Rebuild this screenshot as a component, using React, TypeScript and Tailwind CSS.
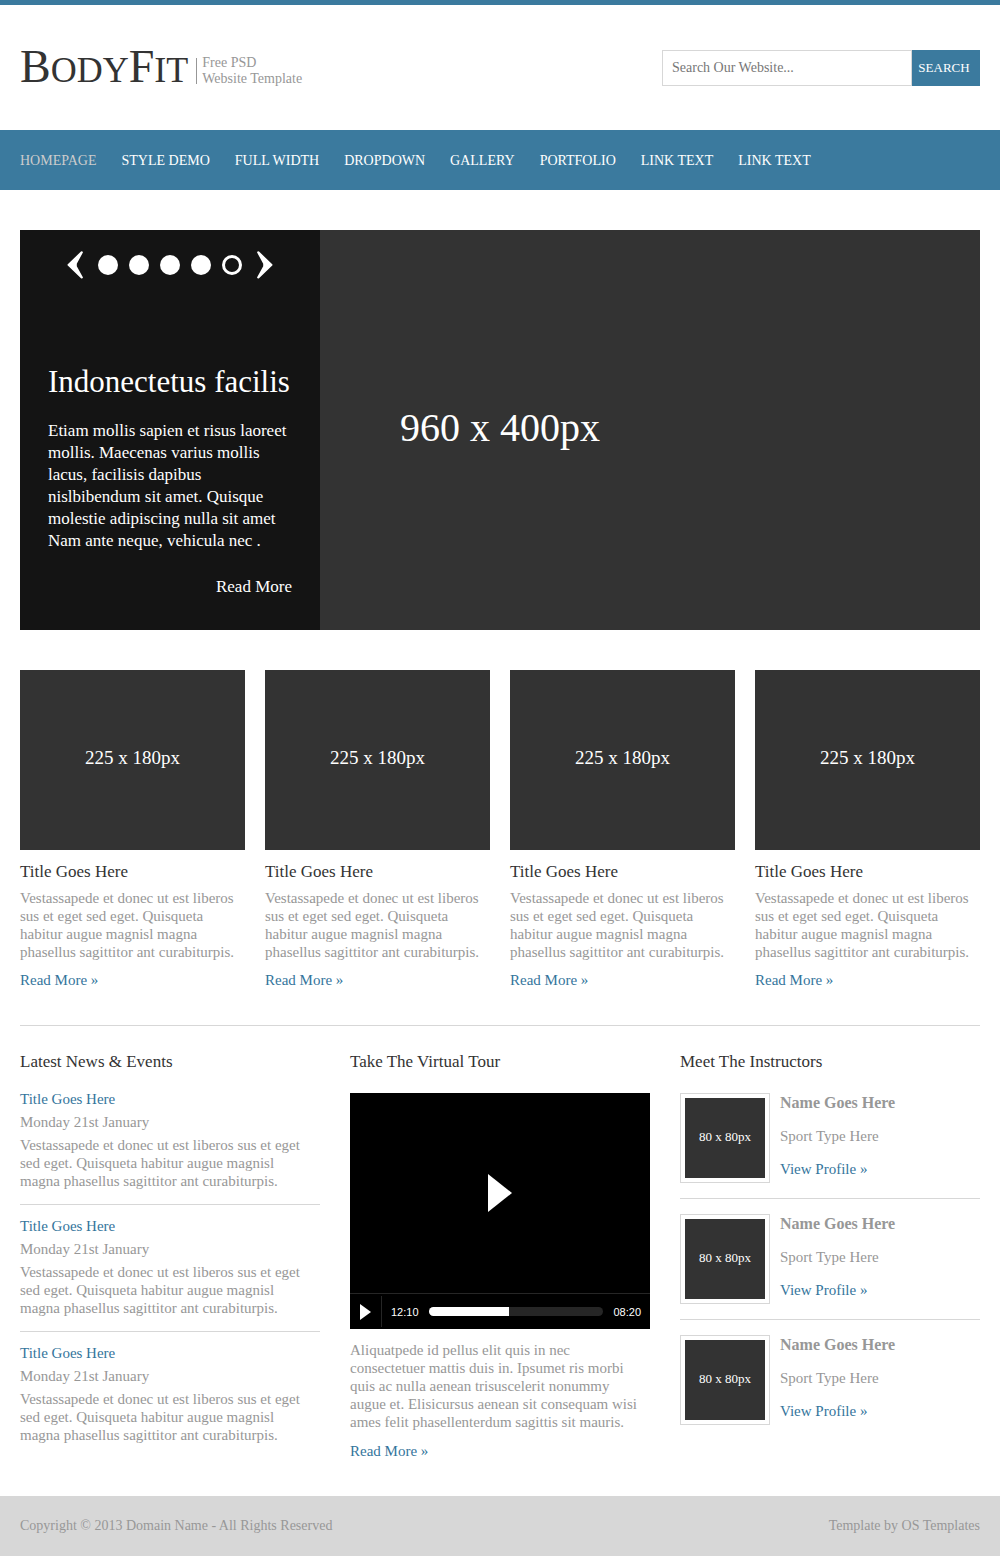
import React from "react";

const navLinks = [
  "HOMEPAGE",
  "STYLE DEMO",
  "FULL WIDTH",
  "DROPDOWN",
  "GALLERY",
  "PORTFOLIO",
  "LINK TEXT",
  "LINK TEXT",
];

function TextLink({ children }: { children: React.ReactNode }) {
  return (
    <a href="#" className="text-[#34759c] hover:underline">
      {children}
    </a>
  );
}

function Header() {
  return (
    <header className="border-t-5 border-[#3b7a9e]">
      <div className="mx-auto flex h-[125px] max-w-[1000px] items-center justify-between px-5">
        <div className="flex items-center pt-[6px]">
          <h1 className="pb-1 text-[46px] leading-[46px] text-[#333333]">
            <a href="#">
              B<span className="text-[36px]">ODY</span>F<span className="text-[36px]">IT</span>
            </a>
          </h1>
          <div className="ml-2 h-[26px] w-px bg-[#979797]" />
          <p className="ml-[5px] text-[14px] leading-4">
            Free PSD
            <br />
            Website Template
          </p>
        </div>
        <form className="flex h-9" onSubmit={(e) => e.preventDefault()}>
          <input
            type="text"
            aria-label="Search our website"
            placeholder="Search Our Website..."
            className="w-[250px] border border-[#d7d7d7] px-[9px] text-[14px] text-[#777777] outline-none placeholder:text-[#777777]"
          />
          <button type="submit" className="w-[68px] bg-[#3b7a9e] pr-1 text-[13px] text-white">
            SEARCH
          </button>
        </form>
      </div>
    </header>
  );
}

function Nav() {
  return (
    <nav className="bg-[#3b7a9e]">
      <ul className="mx-auto flex h-[60px] max-w-[1000px] items-center gap-[25px] px-5 pt-[2px] text-[14px] text-white">
        {navLinks.map((label, i) => (
          <li key={i}>
            <a href="#" className={i === 0 ? "text-[#cccccc]" : "hover:text-[#cccccc]"}>
              {label}
            </a>
          </li>
        ))}
      </ul>
    </nav>
  );
}

function Hero() {
  return (
    <section className="relative flex h-[400px] items-center justify-center bg-[#333333] pb-1 text-white">
      <p className="text-[40px] leading-[40px]">960 x 400px</p>
      <div className="absolute inset-y-0 left-0 flex w-[300px] flex-col bg-[#141414] px-7">
        <div className="mt-5 flex h-[30px] items-center justify-center">
          <button type="button" aria-label="Previous slide" className="mr-[14px]">
            <svg width="17" height="28" viewBox="0 0 17 28" fill="white">
              <path d="M14 .5Q15.300 0 16 1.300L9.800 12.800V15.200L16 26.500Q15.300 28 14 27.300L.500 14.300V13.500Z" />
            </svg>
          </button>
          <div className="flex gap-[11px]">
            {[1, 2, 3, 4, 5].map((n) => (
              <button
                key={n}
                type="button"
                aria-label={`Slide ${n}`}
                className={
                  n === 5
                    ? "size-5 rounded-full border-3 border-white"
                    : "size-5 rounded-full bg-white"
                }
              />
            ))}
          </div>
          <button type="button" aria-label="Next slide" className="ml-[14px]">
            <svg width="17" height="28" viewBox="0 0 17 28" fill="white">
              <path d="M3 .5Q1.700 0 1 1.300L7.200 12.800V15.200L1 26.500Q1.700 28 3 27.300L16.500 14.300V13.500Z" />
            </svg>
          </button>
        </div>
        <h2 className="mt-[84px] text-[31px] leading-9 whitespace-nowrap">Indonectetus facilis</h2>
        <p className="mt-5 text-[17px] leading-[22px]">
          Etiam mollis sapien et risus laoreet mollis. Maecenas varius mollis lacus, facilisis
          dapibus nislbibendum sit amet. Quisque molestie adipiscing nulla sit amet Nam ante neque,
          vehicula nec .
        </p>
        <a href="#" className="mt-6 self-end text-[17px] leading-[22px]">
          Read More
        </a>
      </div>
    </section>
  );
}

function FeatureCard() {
  return (
    <article>
      <div className="flex h-[180px] items-center justify-center bg-[#333333] pb-1 text-[19px] text-white">
        225 x 180px
      </div>
      <h2 className="mt-[10px] text-[17px] leading-6 text-[#333333]">Title Goes Here</h2>
      <p className="mt-[5px]">
        Vestassapede et donec ut est liberos sus et eget sed eget. Quisqueta habitur augue magnisl
        magna phasellus sagittitor ant curabiturpis.
      </p>
      <p className="mt-[10px]">
        <TextLink>Read More »</TextLink>
      </p>
    </article>
  );
}

function ColumnTitle({ children }: { children: React.ReactNode }) {
  return <h2 className="text-[17px] leading-6 text-[#333333]">{children}</h2>;
}

function News() {
  return (
    <section>
      <ColumnTitle>Latest News &amp; Events</ColumnTitle>
      <ul className="mt-4">
        {[0, 1, 2].map((i) => (
          <li
            key={i}
            className="mb-3 flex flex-col gap-[5px] border-b border-[#d7d7d7] pb-[14px] last:mb-0 last:border-0 last:pb-0"
          >
            <TextLink>Title Goes Here</TextLink>
            <p>Monday 21st January</p>
            <p className="pr-3">
              Vestassapede et donec ut est liberos sus et eget sed eget. Quisqueta habitur augue
              magnisl magna phasellus sagittitor ant curabiturpis.
            </p>
          </li>
        ))}
      </ul>
    </section>
  );
}

function Tour() {
  return (
    <section>
      <ColumnTitle>Take The Virtual Tour</ColumnTitle>
      <div className="mt-[19px] bg-black text-white">
        <div className="flex h-[200px] items-center justify-center">
          <button type="button" aria-label="Play video">
            <svg width="24" height="38" viewBox="0 0 24 38" fill="white">
              <path d="M0 0 24 19 0 38Z" />
            </svg>
          </button>
        </div>
        <div className="flex h-9 items-center border-t border-[#262626] pr-[9px] font-['Liberation_Sans'] text-[11px]">
          <button
            type="button"
            aria-label="Play"
            className="flex h-[31px] w-8 items-center border-r border-[#262626] pl-[10px]"
          >
            <svg width="11" height="16" viewBox="0 0 11 16" fill="white">
              <path d="M0 0 11 8 0 16Z" />
            </svg>
          </button>
          <span className="ml-[9px]">12:10</span>
          <div className="mx-[10px] h-[9px] flex-1 overflow-hidden rounded-full bg-[#262626]">
            <div className="h-full bg-white" style={{ width: "46%" }} />
          </div>
          <span>08:20</span>
        </div>
      </div>
      <p className="mt-3 pr-3">
        Aliquatpede id pellus elit quis in nec consectetuer mattis duis in. Ipsumet ris morbi quis
        ac nulla aenean trisuscelerit nonummy augue et. Elisicursus aenean sit consequam wisi ames
        felit phasellenterdum sagittis sit mauris.
      </p>
      <p className="mt-[11px]">
        <TextLink>Read More »</TextLink>
      </p>
    </section>
  );
}

function Instructors() {
  return (
    <section>
      <ColumnTitle>Meet The Instructors</ColumnTitle>
      <ul className="mt-[19px]">
        {[0, 1, 2].map((i) => (
          <li
            key={i}
            className="mb-[15px] flex gap-[10px] border-b border-[#d7d7d7] pb-[15px] last:mb-0 last:border-0 last:pb-0"
          >
            <div className="size-[90px] border border-[#d7d7d7] p-1">
              <div className="flex h-full items-center justify-center bg-[#333333] pb-[2px] text-[13px] text-white">
                80 x 80px
              </div>
            </div>
            <div className="flex flex-col gap-[15px] pt-px">
              <h3 className="text-[16px] font-bold">Name Goes Here</h3>
              <p>Sport Type Here</p>
              <TextLink>View Profile »</TextLink>
            </div>
          </li>
        ))}
      </ul>
    </section>
  );
}

export default function App() {
  return (
    <div className="bg-white font-['Liberation_Serif',serif] text-[15px] leading-[18px] text-[#979797]">
      <Header />
      <Nav />
      <main className="mx-auto max-w-[1000px] px-5 pt-10 pb-9">
        <Hero />
        <div className="mt-10 grid grid-cols-4 gap-5 border-b border-[#d7d7d7] pb-9">
          {[0, 1, 2, 3].map((i) => (
            <FeatureCard key={i} />
          ))}
        </div>
        <div className="mt-6 grid grid-cols-3 gap-[30px]">
          <News />
          <Tour />
          <Instructors />
        </div>
      </main>
      <footer className="bg-[#d7d7d7]">
        <div className="mx-auto flex h-[60px] max-w-[1000px] items-center justify-between px-5 text-[14px]">
          <p>Copyright © 2013 Domain Name - All Rights Reserved</p>
          <p>
            Template by <a href="#">OS Templates</a>
          </p>
        </div>
      </footer>
    </div>
  );
}
